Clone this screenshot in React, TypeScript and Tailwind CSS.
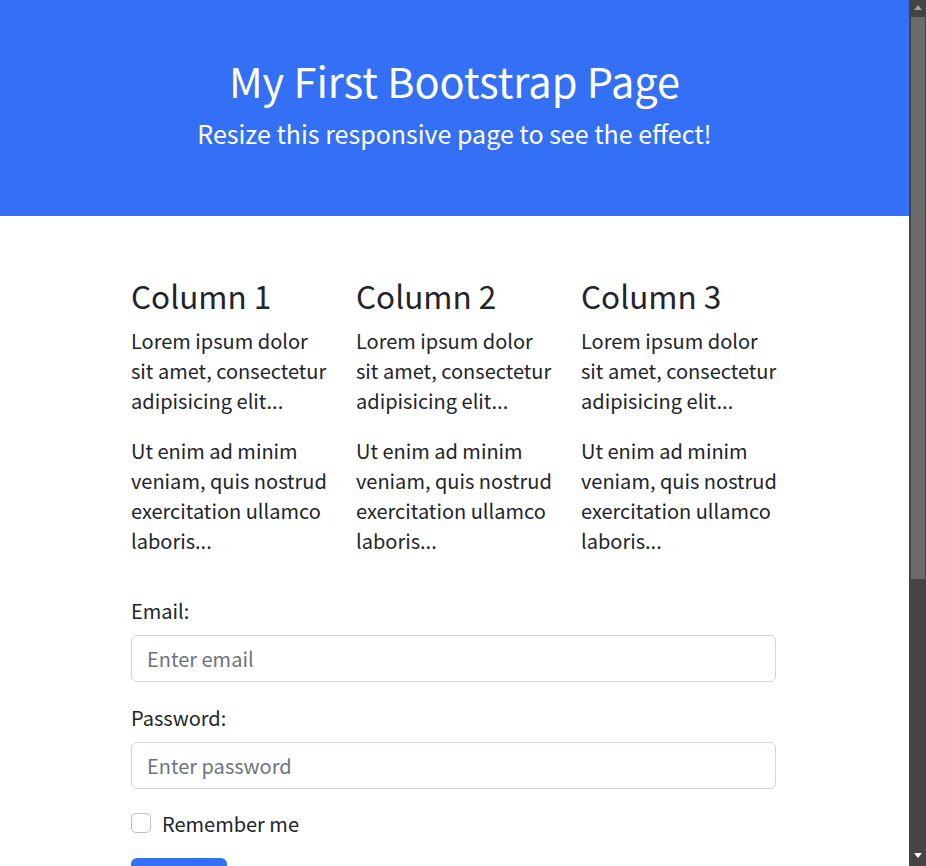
export default function App() {
  const font = "font-['Noto_Sans_CJK_KR','Noto_Sans',sans-serif]";

  const columns = ['Column 1', 'Column 2', 'Column 3'];

  return (
    <div className={`flex h-[866px] w-[926px] overflow-hidden bg-white text-[#212529] ${font}`}>
      {/* Page */}
      <div className="w-[909px] shrink-0">
        {/* Header */}
        <div className="h-[216px] bg-[#3470f5] pt-[56px] text-center text-white">
          <h1 className="mb-[13px] text-[41.5px] leading-[49px] font-normal">My First Bootstrap Page</h1>
          <p className="text-[25px] leading-[30px]">Resize this responsive page to see the effect!</p>
        </div>

        {/* Content */}
        <div className="ml-[116px] mt-[60px] w-[675px] px-[15px]">
          <div className="-mx-[15px] grid grid-cols-3">
            {columns.map((title) => (
              <div key={title} className="whitespace-nowrap px-[15px]">
                <h3 className="mb-[10px] text-[31.5px] leading-[38px] font-normal">{title}</h3>
                <p className="mb-[18px] pt-[2px] text-[20px] leading-[30px]">
                  Lorem ipsum dolor
                  <br />
                  sit amet, consectetur
                  <br />
                  adipisicing elit...
                </p>
                <p className="mb-[20px] pt-[2px] text-[20px] leading-[30px]">
                  Ut enim ad minim
                  <br />
                  veniam, quis nostrud
                  <br />
                  exercitation ullamco
                  <br />
                  laboris...
                </p>
              </div>
            ))}
          </div>

          {/* Form */}
          <form className="mt-[18px] flex flex-col gap-[19px] text-[20px] leading-[30px]">
            <div className="flex flex-col gap-[9px]">
              <label className="pt-[2px]">Email:</label>
              <input
                type="email"
                placeholder="Enter email"
                className="h-[47px] w-full rounded-[6px] border border-[#ced4da] px-[15px] text-[20px] placeholder:text-[#6c757d] focus:outline-none"
              />
            </div>
            <div className="flex flex-col gap-[9px]">
              <label className="pt-[2px]">Password:</label>
              <input
                type="password"
                placeholder="Enter password"
                className="h-[47px] w-full rounded-[6px] border border-[#ced4da] px-[15px] text-[20px] placeholder:text-[#6c757d] focus:outline-none"
              />
            </div>
            <div className="flex h-[30px] items-center gap-[11px]">
              <span className="h-[20px] w-[20px] shrink-0 rounded-[5px] border border-[#bfbfbf] bg-white" />
              <span className="pt-[2px]">Remember me</span>
            </div>
            <button type="button" className="mt-[1px] h-[47px] w-[96px] rounded-[6px] bg-[#3470f5] text-white">
              Submit
            </button>
          </form>
        </div>
      </div>

      {/* Scrollbar */}
      <div className="flex h-full w-[17px] shrink-0 flex-col bg-[#444444]">
        <div className="flex h-[17px] justify-center pt-[5px]">
          <div className="h-0 w-0 border-x-[4px] border-b-[5px] border-x-transparent border-b-[#a3a3a3]" />
        </div>
        <div className="ml-[2px] mr-[1px] h-[562px] bg-[#6b6b6b]" />
        <div className="flex-1" />
        <div className="flex h-[17px] justify-center pt-[4px]">
          <div className="h-0 w-0 border-x-[4px] border-t-[5px] border-x-transparent border-t-white" />
        </div>
      </div>
    </div>
  );
}
